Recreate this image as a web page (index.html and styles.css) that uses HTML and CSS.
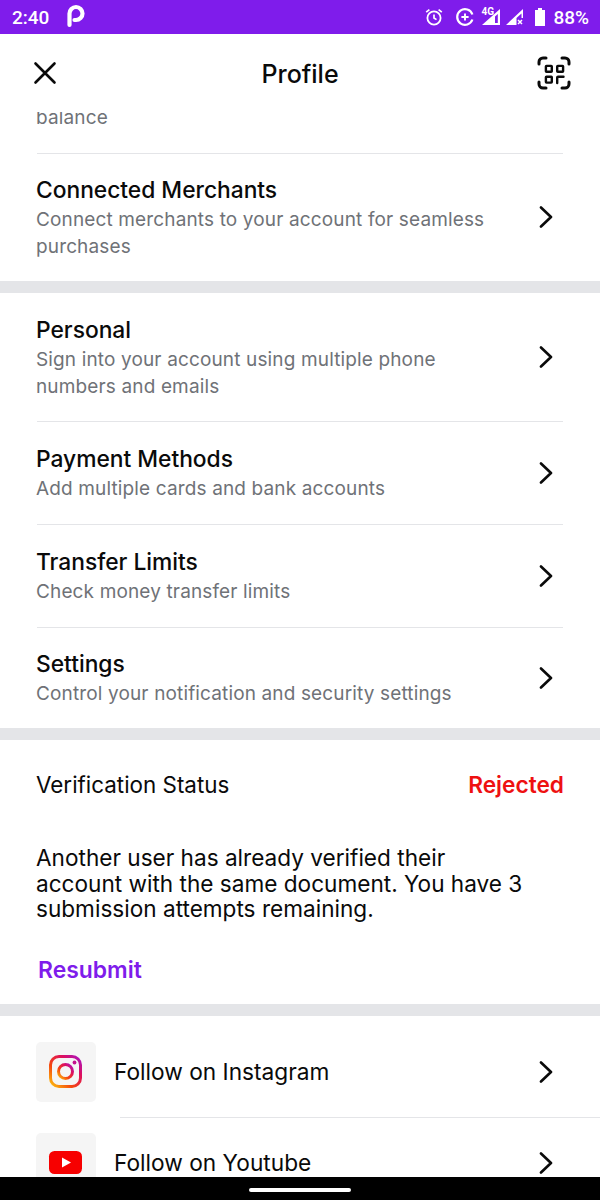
FILE: index.html
```html
<!DOCTYPE html>
<html lang="en">
<head>
<meta charset="utf-8">
<title>Profile</title>
<link rel="stylesheet" href="styles.css">
</head>
<body>
<div class="phone">
  <div class="statusbar">
    <span class="time">2:40</span>
    <svg class="plogo" width="20" height="24" viewBox="0 0 20 24"><path d="M3.500 21V9.500a6.500 6.500 0 1 1 6.500 6.500H8.500" fill="none" stroke="#fff" stroke-width="4.200" stroke-linecap="round"/></svg>
    <span class="spacer"></span>
    <svg class="si" width="20" height="20" viewBox="0 0 20 20" fill="none" stroke="#fff"><circle cx="10" cy="11" r="6.600" stroke-width="1.800"/><path d="M10 7.500V11l2.500 1.600M2.200 5.200 5.400 2.600M17.800 5.200l-3.200-2.600" stroke-width="1.700"/></svg>
    <svg class="si gap1" width="20" height="20" viewBox="0 0 20 20" fill="none" stroke="#fff"><path d="M17.400 7.500A7.800 7.800 0 1 0 17.400 12.500" stroke-width="2.200"/><path d="M10 6.400v7.200M6.400 10h7.200" stroke-width="1.900"/></svg>
    <span class="signal">
      <svg width="20" height="20" viewBox="0 0 20 20"><path d="M20 2v16H2z" fill="#fff"/><path d="M17.800 7v9H15V9.500z" fill="#7f1ceb"/></svg>
      <span class="fourg">4G</span>
    </span>
    <svg class="si gap2" width="19" height="20" viewBox="0 0 19 20"><path d="M18 2 1 18h10.500v-7l5-4.500V11H18z" fill="#fff"/><path d="M13 13l4 4M17 13l-4 4" stroke="#fff" stroke-width="1.500"/></svg>
    <svg class="si gap3" width="12" height="20" viewBox="0 0 12 20"><path d="M4 1h4v2h3v16H1V3h3z" fill="#fff"/></svg>
    <span class="pct">88%</span>
  </div>
  <header class="topbar">
    <svg class="close" width="24" height="24" viewBox="0 0 24 24"><path d="M2.500 2.500l19 19M21.500 2.500l-19 19" stroke="#0a0a0a" stroke-width="2.600" stroke-linecap="round"/></svg>
    <h1 class="title">Profile</h1>
    <svg class="qr" width="36" height="36" viewBox="0 0 36 36" fill="none" stroke="#0a0a0a" stroke-width="3" stroke-linecap="round" stroke-linejoin="round"><path d="M3 9V7a4 4 0 0 1 4-4h3M26 3h3a4 4 0 0 1 4 4v2M33 27v2a4 4 0 0 1-4 4h-3M10 33H7a4 4 0 0 1-4-4v-2"/><g stroke-width="2.400"><rect x="9.900" y="10.900" width="5.900" height="5.900" rx=".6"/><rect x="21.200" y="10.900" width="5.900" height="5.900" rx=".6"/><rect x="9.900" y="21.700" width="5.900" height="5.900" rx=".6"/><path d="M21.200 28V22.500a.8.8 0 0 1 .8-.8h5.500"/></g></svg>
  </header>
  <main class="scroll">
    <div class="clipped"><span class="sub">balance</span></div>
    <section class="group">
      <a class="row row-tall">
        <div class="copy"><div class="name">Connected Merchants</div><div class="sub">Connect merchants to your account for seamless purchases</div></div>
        <svg class="chev" width="16" height="22" viewBox="0 0 16 22"><path d="M3 1.500 13 11 3 20.500" fill="none" stroke="#0a0a0a" stroke-width="2.600" stroke-linecap="round" stroke-linejoin="round"/></svg>
      </a>
    </section>
    <section class="group">
      <a class="row row-tall no-line">
        <div class="copy"><div class="name">Personal</div><div class="sub">Sign into your account using multiple phone numbers and emails</div></div>
        <svg class="chev" width="16" height="22" viewBox="0 0 16 22"><path d="M3 1.500 13 11 3 20.500" fill="none" stroke="#0a0a0a" stroke-width="2.600" stroke-linecap="round" stroke-linejoin="round"/></svg>
      </a>
      <a class="row">
        <div class="copy"><div class="name">Payment Methods</div><div class="sub">Add multiple cards and bank accounts</div></div>
        <svg class="chev" width="16" height="22" viewBox="0 0 16 22"><path d="M3 1.500 13 11 3 20.500" fill="none" stroke="#0a0a0a" stroke-width="2.600" stroke-linecap="round" stroke-linejoin="round"/></svg>
      </a>
      <a class="row">
        <div class="copy"><div class="name">Transfer Limits</div><div class="sub">Check money transfer limits</div></div>
        <svg class="chev" width="16" height="22" viewBox="0 0 16 22"><path d="M3 1.500 13 11 3 20.500" fill="none" stroke="#0a0a0a" stroke-width="2.600" stroke-linecap="round" stroke-linejoin="round"/></svg>
      </a>
      <a class="row">
        <div class="copy"><div class="name">Settings</div><div class="sub">Control your notification and security settings</div></div>
        <svg class="chev" width="16" height="22" viewBox="0 0 16 22"><path d="M3 1.500 13 11 3 20.500" fill="none" stroke="#0a0a0a" stroke-width="2.600" stroke-linecap="round" stroke-linejoin="round"/></svg>
      </a>
    </section>
    <section class="group verify">
      <div class="verify-head"><span class="verify-label">Verification Status</span><span class="rejected">Rejected</span></div>
      <p class="verify-text">Another user has already verified their<br>account with the same document. You have 3<br>submission attempts remaining.</p>
      <a class="resubmit">Resubmit</a>
    </section>
    <section class="group social">
      <a class="social-row">
        <span class="tile">
          <svg width="36" height="36" viewBox="0 0 36 36" fill="none"><defs><linearGradient id="ig" x1="0" y1="1" x2="1" y2="0"><stop offset="0" stop-color="#fdc20f"/><stop offset=".35" stop-color="#f5470f"/><stop offset=".7" stop-color="#dd0f5e"/><stop offset="1" stop-color="#a815c4"/></linearGradient></defs><rect x="2.500" y="2.500" width="30" height="30" rx="8.500" stroke="url(#ig)" stroke-width="3"/><circle cx="17.500" cy="17.500" r="7" stroke="url(#ig)" stroke-width="3"/><circle cx="26.500" cy="8.500" r="1.900" fill="#c4138f"/></svg>
        </span>
        <span class="social-name">Follow on Instagram</span>
        <svg class="chev" width="16" height="22" viewBox="0 0 16 22"><path d="M3 1.500 13 11 3 20.500" fill="none" stroke="#0a0a0a" stroke-width="2.600" stroke-linecap="round" stroke-linejoin="round"/></svg>
      </a>
      <div class="social-line"></div>
      <a class="social-row second">
        <span class="tile">
          <svg width="36" height="26" viewBox="0 0 36 26"><rect x="1" y="1" width="33" height="23" rx="5.500" fill="#f70000"/><path d="M14 7.500v10l9-5z" fill="#fff"/></svg>
        </span>
        <span class="social-name">Follow on Youtube</span>
        <svg class="chev" width="16" height="22" viewBox="0 0 16 22"><path d="M3 1.500 13 11 3 20.500" fill="none" stroke="#0a0a0a" stroke-width="2.600" stroke-linecap="round" stroke-linejoin="round"/></svg>
      </a>
    </section>
  </main>
  <div class="navbar"><span class="pill"></span></div>
</div>
</body>
</html>
```
FILE: styles.css
```css
* { box-sizing: border-box; }
html, body { margin: 0; padding: 0; }
body { font-family: "Inter", "Liberation Sans", sans-serif; background: #fff; color: #0a0a0a; }
.phone { width: 600px; height: 1200px; display: flex; flex-direction: column; overflow: hidden; background: #fff; }
.statusbar { height: 34px; flex: none; background: #7f1ceb; color: #fff; display: flex; align-items: center; padding: 0 11px 0 12px; }
.time { font: 500 19px "Roboto", sans-serif; }
.plogo { margin-left: 17px; margin-top: -2px; }
.spacer { flex: 1; }
.si { display: block; flex: none; }
.gap1 { margin-left: 11px; }
.gap2 { margin-left: 5px; }
.gap3 { margin-left: 10px; }
.signal { position: relative; width: 20px; height: 20px; margin-left: 5px; flex: none; }
.signal svg { display: block; }
.fourg { position: absolute; left: 1px; top: -1px; font: 700 10px "Roboto", sans-serif; color: #fff; }
.pct { font: 500 19px "Roboto", sans-serif; margin-left: 7px; }
.topbar { height: 78px; flex: none; display: flex; align-items: center; justify-content: space-between; padding: 0 28px 0 33px; position: relative; background: #fff; }
.close { margin-top: -1px; }
.title { position: absolute; left: 0; right: 0; margin: 0; text-align: center; font-size: 25px; font-weight: 500; line-height: 80px; top: 0; }
.scroll { flex: 1; min-height: 0; overflow: hidden; background: #e4e5e8; }
.clipped { height: 41px; background: #fff; padding: 0 36px 22px; overflow: hidden; display: flex; align-items: flex-end; }
.group { background: #fff; margin-bottom: 12px; padding: 0; }
.row { display: flex; align-items: center; justify-content: space-between; margin: 0 37px; height: 103px; border-top: 1px solid #e4e5e8; color: inherit; }
.row.no-line { border-top-color: transparent; }
.row-tall { height: 128px; }
.group .row:last-child { height: 101px; }
.group .row-tall:last-child { height: 128px; }
.copy { margin-left: -1px; width: 470px; padding-top: 2px; }
.name { font-size: 22.800px; font-weight: 500; line-height: 26px; margin-bottom: 3px; letter-spacing: -.02px; }
.sub { font-size: 19px; line-height: 27px; color: #6f7277; letter-spacing: .14px; }
.chev { flex: none; margin: -1px 9px 0 0; }
.verify { height: 264px; padding: 31px 36px 0; }
.verify-head { display: flex; justify-content: space-between; align-items: baseline; }
.verify-label { font-size: 22.400px; }
.rejected { font-size: 22.700px; font-weight: 600; color: #ee1111; }
.verify-text { margin: 47px 0 0; font-size: 22.600px; line-height: 25.500px; }
.resubmit { display: block; margin-top: 34px; margin-left: 2px; font-size: 22.900px; font-weight: 600; color: #7f1ceb; }
.social { margin: 0; padding-top: 26px; height: 400px; }
.social-row { display: flex; align-items: center; height: 60px; padding: 0 37px 0 36px; color: inherit; }
.social-line { height: 1px; margin: 15px 0 0 120px; background: #e4e5e8; }
.second { margin-top: 15px; }
.tile { width: 60px; height: 60px; border-radius: 5px; background: #f5f5f5; flex: none; display: flex; align-items: center; justify-content: center; }
.social-name { flex: 1; margin-left: 18px; padding-bottom: 2px; font-size: 22.700px; }
.navbar { height: 23px; flex: none; background: #000; display: flex; justify-content: center; align-items: center; }
.pill { width: 102px; height: 4px; border-radius: 2px; background: #fff; margin-top: 3px; }
```
